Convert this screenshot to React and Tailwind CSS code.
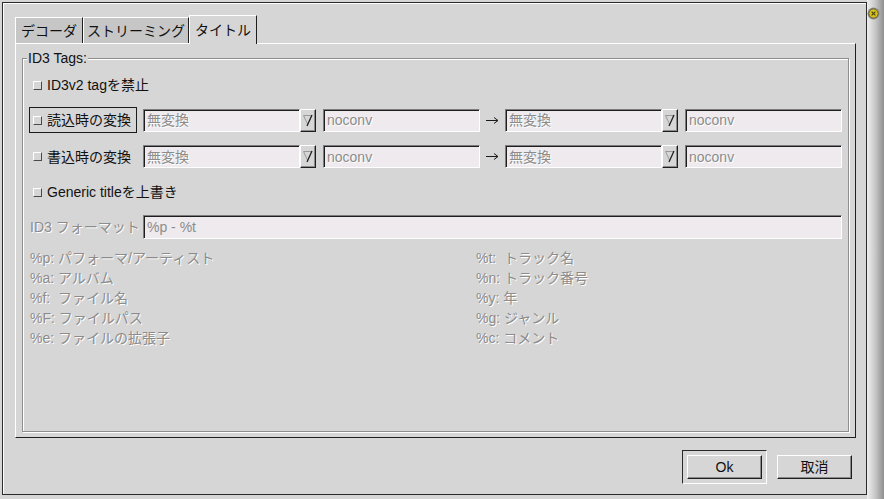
import React from "react";

const dim = "text-[#8c8c8c] [text-shadow:1px_1px_0_#ffffff]";

const CheckBox = () => (
  <span className="block w-[9px] h-[9px] bg-[#d6d6d6] border-t border-l border-t-white border-l-white border-r border-b border-r-[#4a4a4a] border-b-[#4a4a4a]" />
);

const Check = ({ label, focus, className }) => (
  <div
    className={
      "flex items-center gap-[5px] px-[3px] border " +
      (focus ? "border-[#1c1c1c] " : "border-transparent ") +
      (className || "")
    }
  >
    <CheckBox />
    <span className="whitespace-nowrap">{label}</span>
  </div>
);

const Entry = ({ value, className }) => (
  <div
    className={
      "h-[23px] flex items-center pl-[3px] bg-[#eeeaee] border-t border-l border-t-[#7c7c7c] border-l-[#7c7c7c] border-r border-b border-r-white border-b-white shadow-[inset_1px_1px_0_#1e1e1e] whitespace-nowrap overflow-hidden " +
      dim +
      " " +
      (className || "")
    }
  >
    {value}
  </div>
);

const DropButton = () => (
  <div className="w-[16px] h-[23px] flex items-center justify-center bg-[#d6d6d6] border-t border-l border-t-white border-l-white border-r border-b border-r-[#1e1e1e] border-b-[#1e1e1e] shadow-[inset_-1px_-1px_0_#8a8a8a]">
    <svg width="14" height="21" viewBox="0 0 14 21">
      <path d="M2.5 5.5 H11 M2.5 5.5 L6.5 14" stroke="#9a9a9a" strokeWidth="1" fill="none" />
      <path d="M11 5 L6 16" stroke="#202020" strokeWidth="1.3" fill="none" />
    </svg>
  </div>
);

const Combo = () => (
  <div className="flex">
    <Entry value="無変換" className="w-[157px]" />
    <DropButton />
  </div>
);

const Arrow = () => (
  <div className="w-[25px] flex items-center justify-center">
    <svg width="13" height="9" viewBox="0 0 13 9">
      <path d="M0 4.5 H11.5" stroke="#1a1a1a" strokeWidth="1" />
      <path d="M8 1.5 L12 4.5 L8 7.5" stroke="#1a1a1a" strokeWidth="1" fill="none" />
    </svg>
  </div>
);

const ConvRow = ({ label, focus, className }) => (
  <div className={"flex items-center " + (className || "")}>
    <Check label={label} focus={focus} className="w-[108px] h-full" />
    <div className="ml-[6px]">
      <Combo />
    </div>
    <Entry value="noconv" className="ml-[7px] w-[157px]" />
    <Arrow />
    <Combo />
    <Entry value="noconv" className="ml-[7px] w-[157px]" />
  </div>
);

const legendLeft = [
  "%p: パフォーマ/アーティスト",
  "%a: アルバム",
  "%f:  ファイル名",
  "%F: ファイルパス",
  "%e: ファイルの拡張子",
];
const legendRight = [
  "%t:  トラック名",
  "%n: トラック番号",
  "%y: 年",
  "%g: ジャンル",
  "%c: コメント",
];

const Tab = ({ label, active, className }) => (
  <div
    className={
      "flex items-center justify-center border-t border-l border-t-white border-l-white border-r border-r-[#1e1e1e] whitespace-nowrap " +
      (active ? "h-[29px] -mb-px relative z-10 bg-[#d6d6d6] " : "h-[26px] bg-[#c6c6c6] ") +
      (className || "")
    }
  >
    {label}
  </div>
);

const Button = ({ label }) => (
  <div className="w-[75px] h-[24px] flex items-center justify-center bg-[#d6d6d6] border-t border-l border-t-white border-l-white border-r border-b border-r-[#1e1e1e] border-b-[#1e1e1e] shadow-[inset_-1px_-1px_0_#8a8a8a]">
    {label}
  </div>
);

export default function App() {
  return (
    <div className="w-[884px] h-[499px] bg-[#d6d6d6] flex overflow-hidden text-[14px] leading-[18px] text-[#111] font-['Liberation_Sans','Noto_Sans_CJK_JP',sans-serif]">
      <div className="w-[867px] h-full pt-[2px] pl-[2px]">
        <div className="w-[865px] h-[493px] border border-[#2a2a2a] shadow-[inset_1px_1px_0_#ffffff] flex flex-col pl-[12px] pt-[12px]">
          {/* tabs */}
          <div className="flex items-end h-[28px]">
            <Tab label="デコーダ" className="w-[68px]" />
            <Tab label="ストリーミング" className="w-[106px]" />
            <Tab label="タイトル" active className="w-[68px]" />
          </div>

          {/* page */}
          <div className="w-[841px] h-[395px] border-t border-l border-t-white border-l-white border-r border-b border-r-[#1e1e1e] border-b-[#1e1e1e] flex flex-col">
            <div className="relative ml-[6px] mt-[14px] w-[827px] h-[374px] border border-[#8e8e8e] shadow-[inset_1px_1px_0_#ffffff,1px_1px_0_#ffffff] flex flex-col pl-[6px]">
              <div className="absolute left-[4px] -top-[10px] px-[1px] bg-[#d6d6d6]">ID3 Tags:</div>

              <Check label="ID3v2 tagを禁止" className="mt-[16px] h-[20px]" />

              <ConvRow label="読込時の変換" focus className="mt-[12px] h-[26px]" />
              <ConvRow label="書込時の変換" className="mt-[11px] h-[25px]" />

              <Check label="Generic titleを上書き" className="mt-[13px] h-[20px]" />

              <div className="flex items-center mt-[13px] h-[24px]">
                <div className={"w-[114px] pl-[1px] whitespace-nowrap " + dim}>ID3 フォーマット</div>
                <div className="h-[24px] w-[699px] flex items-center pl-[3px] bg-[#eeeaee] border-t border-l border-t-[#7c7c7c] border-l-[#7c7c7c] border-r border-b border-r-white border-b-white shadow-[inset_1px_1px_0_#1e1e1e] text-[#8c8c8c]">
                  %p - %t
                </div>
              </div>

              <div className={"grid grid-cols-[446px_1fr] mt-[9px] pl-[1px] " + dim}>
                <div className="flex flex-col">
                  {legendLeft.map((t) => (
                    <div key={t} className="h-[20px] flex items-center whitespace-pre">
                      {t}
                    </div>
                  ))}
                </div>
                <div className="flex flex-col">
                  {legendRight.map((t) => (
                    <div key={t} className="h-[20px] flex items-center whitespace-pre">
                      {t}
                    </div>
                  ))}
                </div>
              </div>
            </div>
          </div>

          {/* buttons */}
          <div className="flex justify-end items-center mt-[12px] pr-[14px]">
            <div className="p-[4px] border-t border-l border-t-[#2a2a2a] border-l-[#2a2a2a] border-r border-b border-r-white border-b-white">
              <Button label="Ok" />
            </div>
            <div className="ml-[10px]">
              <Button label="取消" />
            </div>
          </div>
        </div>
      </div>

      {/* window decoration strip */}
      <div className="relative w-[17px] h-full bg-linear-to-r from-[#efefef] via-[#c6c6c6] to-[#8f8f8f]">
        <svg className="absolute left-0 top-[7px]" width="13" height="13" viewBox="0 0 13 13">
          <circle cx="6.5" cy="6.5" r="6" fill="#8a8a8a" />
          <circle cx="6.5" cy="6.5" r="4.6" fill="#d9c41e" stroke="#5a5220" strokeWidth="0.8" />
          <path d="M4.6 4.6 L8.4 8.4 M8.4 4.6 L4.6 8.4" stroke="#4a4410" strokeWidth="1.2" />
        </svg>
      </div>
    </div>
  );
}
